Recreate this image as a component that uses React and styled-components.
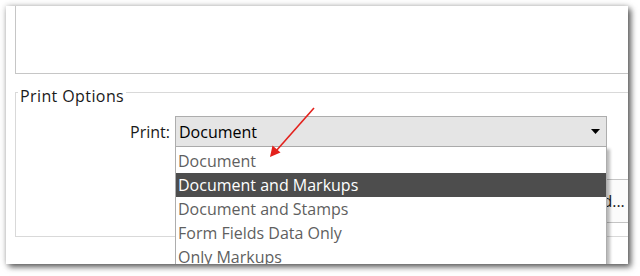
import React from "react";
import styled, { createGlobalStyle } from "styled-components";

const Global = createGlobalStyle`
  html, body { margin: 0; padding: 0; background: #ffffff; }
  body { font-family: "Open Sans", "Noto Sans", sans-serif; }
  #root { width: 640px; height: 276px; }
`;

const Frame = styled.div`
  position: relative;
  width: 622px;
  height: 258px;
  margin: 6px 0 0 6px;
  background: #ffffff;
  overflow: hidden;
  box-shadow: 3px 3px 6px rgba(0, 0, 0, 0.6), 0 0 6px rgba(0, 0, 0, 0.22);
  padding-left: 9px;
  box-sizing: border-box;
  font-size: 16px;
  color: #1a1a1a;
`;

const UpperBox = styled.div`
  height: 67px;
  border-left: 1px solid #c6c6c6;
  border-bottom: 1px solid #c6c6c6;
`;

const Group = styled.fieldset`
  margin: 3px 0 0 0;
  padding: 9px 0 0 0;
  border: 1px solid #d9d9d9;
  border-right: none;
  height: 160px;
  box-sizing: border-box;
  min-width: 0;
`;

const Legend = styled.legend`
  margin-left: 2px;
  padding: 8px 2px 0 2px;
  line-height: 22px;
  font-size: 16px;
  letter-spacing: 0.4px;
  color: #1a1a1a;
`;

const FieldRow = styled.div`
  display: flex;
  align-items: center;
  gap: 5px;
`;

const Label = styled.span`
  width: 154px;
  text-align: right;
  color: #1a1a1a;
`;

const ComboWrap = styled.div`
  position: relative;
  width: 432px;
`;

const Combo = styled.div`
  display: flex;
  align-items: center;
  justify-content: space-between;
  height: 31px;
  box-sizing: border-box;
  padding: 0 6px 0 3px;
  background: #e5e5e5;
  border: 1px solid #adadad;
  color: #000000;
`;

const Caret = styled.svg`
  width: 9px;
  height: 5px;
`;

const Menu = styled.ul`
  position: absolute;
  left: 0;
  top: 100%;
  width: 100%;
  margin: 0;
  padding: 2px 0 0 0;
  list-style: none;
  box-sizing: border-box;
  background: #ffffff;
  border: 1px solid #adadad;
  border-top: none;
  box-shadow: 3px 2px 3px rgba(0, 0, 0, 0.28);
  z-index: 2;
`;

const Item = styled.li`
  height: 24px;
  line-height: 24px;
  padding-left: 2px;
  white-space: nowrap;
  color: ${(p) => (p.$active ? "#ffffff" : "#5f5f5f")};
  background: ${(p) => (p.$active ? "#4d4d4d" : "transparent")};
`;

const ButtonRow = styled.div`
  display: flex;
  justify-content: flex-end;
  margin-top: 32px;
  margin-right: -6px;
`;

const Button = styled.button`
  width: 104px;
  height: 44px;
  font: inherit;
  font-size: 16px;
  color: #1a1a1a;
  background: #fbfbfb;
  border: 1px solid #c4c4c4;
`;

const Pointer = styled.svg`
  position: absolute;
  left: 0;
  top: 0;
  width: 622px;
  height: 258px;
  pointer-events: none;
  z-index: 3;
`;

const items = [
  "Document",
  "Document and Markups",
  "Document and Stamps",
  "Form Fields Data Only",
  "Only Markups",
];

export default function App() {
  return (
    <>
      <Global />
      <Frame>
        <UpperBox />
        <Group>
          <Legend>Print Options</Legend>
          <FieldRow>
            <Label>Print:</Label>
            <ComboWrap>
              <Combo>
                <span>Document</span>
                <Caret viewBox="0 0 9 5">
                  <path d="M0 0 H9 L4.5 5 Z" fill="#000" />
                </Caret>
              </Combo>
              <Menu>
                {items.map((t, i) => (
                  <Item key={t} $active={i === 1}>
                    {t}
                  </Item>
                ))}
              </Menu>
            </ComboWrap>
          </FieldRow>
          <ButtonRow>
            <Button>Advanced...</Button>
          </ButtonRow>
        </Group>
        <Pointer viewBox="0 0 622 258">
          <line x1="308" y1="102" x2="270" y2="145" stroke="#e3211c" strokeWidth="1.6" />
          <path d="M264 151 L266.5 139.5 L274.5 146.5 Z" fill="#e3211c" />
        </Pointer>
      </Frame>
    </>
  );
}
